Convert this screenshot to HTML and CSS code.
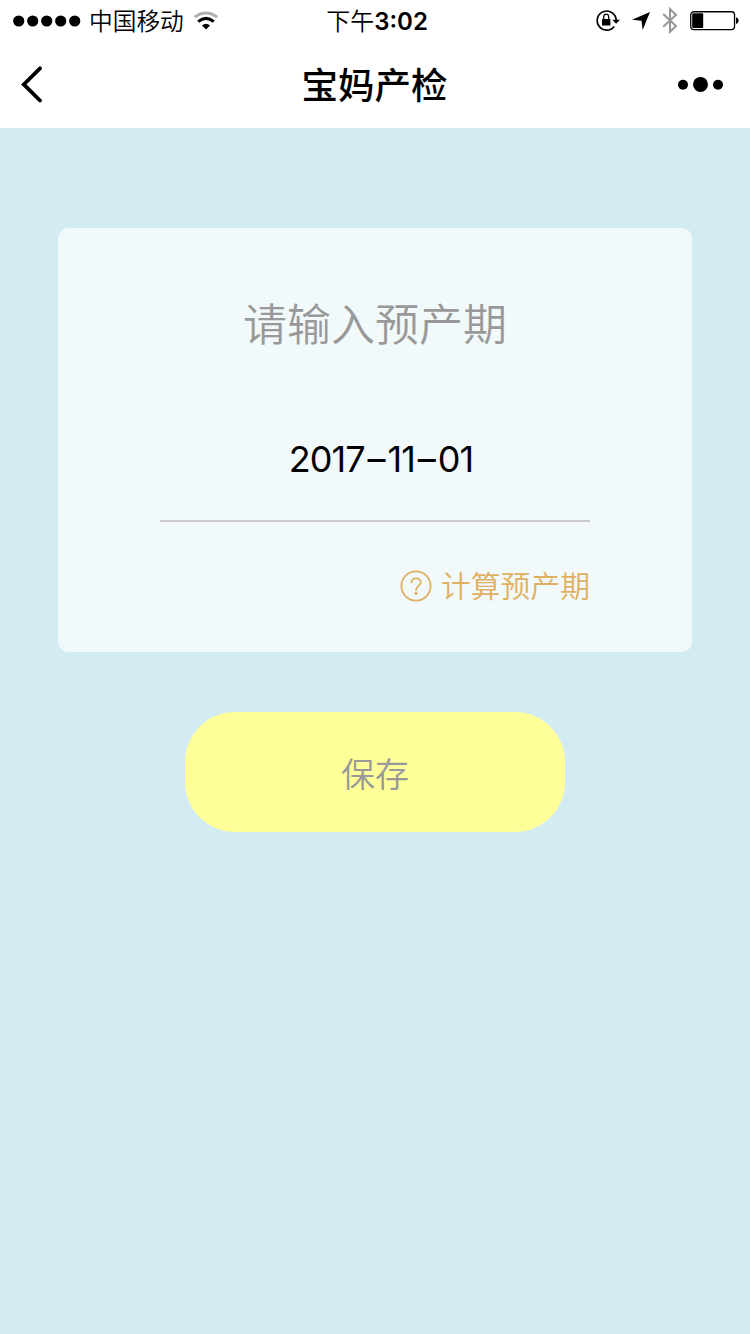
FILE: index.html
```html
<!DOCTYPE html>
<html lang="zh-CN">
<head>
    <meta charset="UTF-8">
    <meta name="viewport" content="width=device-width, initial-scale=1.0">
    <title>宝妈产检</title>
    <link rel="stylesheet" href="styles.css">
</head>
<body>
    <header>
        <div class="status-bar">
            <div class="status-left">
                <svg class="signal" width="68" height="12" viewBox="0 0 68 12">
                    <circle cx="5.7" cy="6" r="5.6"/>
                    <circle cx="19.7" cy="6" r="5.6"/>
                    <circle cx="33.7" cy="6" r="5.6"/>
                    <circle cx="47.7" cy="6" r="5.6"/>
                    <circle cx="61.7" cy="6" r="5.6"/>
                </svg>
                <span class="carrier">中国移动</span>
                <svg class="wifi" width="26" height="20" viewBox="0 0 26 20">
                    <path d="M1.7 6.2Q13 -2.2 24.3 6.2" fill="none" stroke="#b0b0b0" stroke-width="2.7"/>
                    <path d="M5.2 10.6Q13 4 20.8 10.6" fill="none" stroke="#000" stroke-width="3.2"/>
                    <path d="M8.9 14.4Q13 11 17.1 14.4L13 18.4Z"/>
                </svg>
            </div>
            <div class="time">下午<b>3:02</b></div>
            <div class="status-right">
                <svg class="lock" width="24" height="22" viewBox="0 0 24 22">
                    <path d="M18.2 16.4A9.5 9.5 0 1 1 20.2 10.5" fill="none" stroke="#000" stroke-width="1.7"/>
                    <path d="M16.3 9.8H24L20.1 13.8Z"/>
                    <rect x="6" y="9.1" width="8.4" height="6.4" rx=".6"/>
                    <path d="M7.7 9.5V7.1a2.5 2.9 0 0 1 5 0V9.5" fill="none" stroke="#000" stroke-width="1.3"/>
                </svg>
                <svg class="location" width="18" height="18" viewBox="0 0 18 18">
                    <path d="M18 0L10.6 18L9.6 8.7L0 7.7Z"/>
                </svg>
                <svg class="bluetooth" width="16" height="28" viewBox="0 0 16 28">
                    <path d="M1.2 7.1L14 18.9L8 24.7V2.1L14 7.9L1.2 19.8" fill="none" stroke="#999" stroke-width="2.1"/>
                </svg>
                <svg class="battery" width="49" height="20" viewBox="0 0 49 20">
                    <rect x=".75" y=".75" width="43.8" height="17.8" rx="3" fill="none" stroke="#000" stroke-width="1.3"/>
                    <rect x="2.2" y="2.3" width="11" height="14.7" rx="1"/>
                    <path d="M46 6.2Q48.7 7.2 48.7 9.6T46 13Z"/>
                </svg>
            </div>
        </div>
        <nav>
            <a class="back" href="#" aria-label="返回">
                <svg width="24" height="38" viewBox="0 0 24 38">
                    <path d="M20 3.3L3.8 19.4L20 35.5" fill="none" stroke="#000" stroke-width="3.8" stroke-linecap="round"/>
                </svg>
            </a>
            <h1>宝妈产检</h1>
            <a class="more" href="#" aria-label="更多">
                <svg width="46" height="16" viewBox="0 0 46 16">
                    <circle cx="5" cy="8.8" r="5"/>
                    <circle cx="22.5" cy="8.4" r="7.5"/>
                    <circle cx="40" cy="8.8" r="5"/>
                </svg>
            </a>
        </nav>
    </header>

    <main>
        <section class="card">
            <h2>请输入预产期</h2>
            <div class="date">2017<span>–</span>11<span>–</span>01</div>
            <a class="calc" href="#">
                <svg width="32" height="32" viewBox="0 0 32 32" fill="none" stroke="#e0b060">
                    <circle cx="16" cy="16" r="14.6" stroke-width="1.8"/>
                    <path d="M11.5 12.5C11.8 6.9 20.7 7.3 20.7 12.3C20.7 16 16 16.2 16 20.2" stroke-width="1.8" stroke-linecap="round"/>
                    <circle cx="16" cy="23.4" r="1.3" fill="#e0b060" stroke-width=".6"/>
                </svg>
                <span>计算预产期</span>
            </a>
        </section>
        <button class="save" type="button">保存</button>
    </main>
</body>
</html>
```
FILE: styles.css
```css
* {
    box-sizing: border-box;
}
body {
    margin: 0;
    min-height: 1334px;
    background-color: #d3ebf3;
    font-family: Inter, 'Noto Sans CJK SC', sans-serif;
    font-weight: 350;
    color: #000;
}
svg {
    display: block;
    flex-shrink: 0;
}
a {
    text-decoration: none;
}
header {
    height: 128px;
    background-color: #fff;
}
.status-bar {
    display: grid;
    grid-template-columns: 1fr auto 1fr;
    align-items: center;
    height: 40px;
    padding: 1px 11px 0 13px;
    font-size: 24px;
    line-height: 37px;
}
.status-left,
.status-right {
    display: flex;
    align-items: center;
}
.status-right {
    justify-content: flex-end;
}
.carrier {
    margin: 0 9px 0 8px;
    padding-top: 2px;
    font-size: 23.7px;
}
.time {
    padding: 1px 0 0 2px;
}
.time b {
    font-weight: 600;
}
.location {
    margin-left: 12px;
}
.bluetooth {
    margin: 0 12px;
}
nav {
    display: grid;
    grid-template-columns: 1fr auto 1fr;
    align-items: center;
    height: 88px;
    padding: 0 26px 0 20px;
}
nav h1 {
    margin: 0;
    padding: 3px 0 0 5px;
    font-size: 36.5px;
    font-weight: 500;
    line-height: 44px;
}
.more {
    justify-self: end;
}
main {
    padding: 100px 58px 0;
}
.card {
    height: 424px;
    padding: 67px 102px 0;
    border-radius: 10px;
    background-color: #f1f9fb;
}
.card h2 {
    margin: 0;
    font-size: 44px;
    font-weight: 350;
    line-height: 60px;
    text-align: center;
    color: #999;
}
.date {
    height: 122px;
    margin-top: 45px;
    padding-left: 12px;
    border-bottom: 2px solid #ccc;
    font-size: 36px;
    font-weight: 400;
    font-feature-settings: 'calt' 0;
    letter-spacing: -1px;
    line-height: 119px;
    text-align: center;
}
.date span {
    margin: 0 3px;
}
.calc {
    display: flex;
    justify-content: flex-end;
    align-items: center;
    gap: 9px;
    margin-top: 44px;
    font-size: 29.8px;
    line-height: 40px;
    color: #e0b060;
}
.save {
    display: block;
    width: 380px;
    height: 120px;
    margin: 60px auto 0;
    padding: 0;
    border: none;
    border-radius: 50px;
    background-color: #ffff99;
    font-family: inherit;
    font-size: 34px;
    font-weight: 350;
    color: #999;
}
```
